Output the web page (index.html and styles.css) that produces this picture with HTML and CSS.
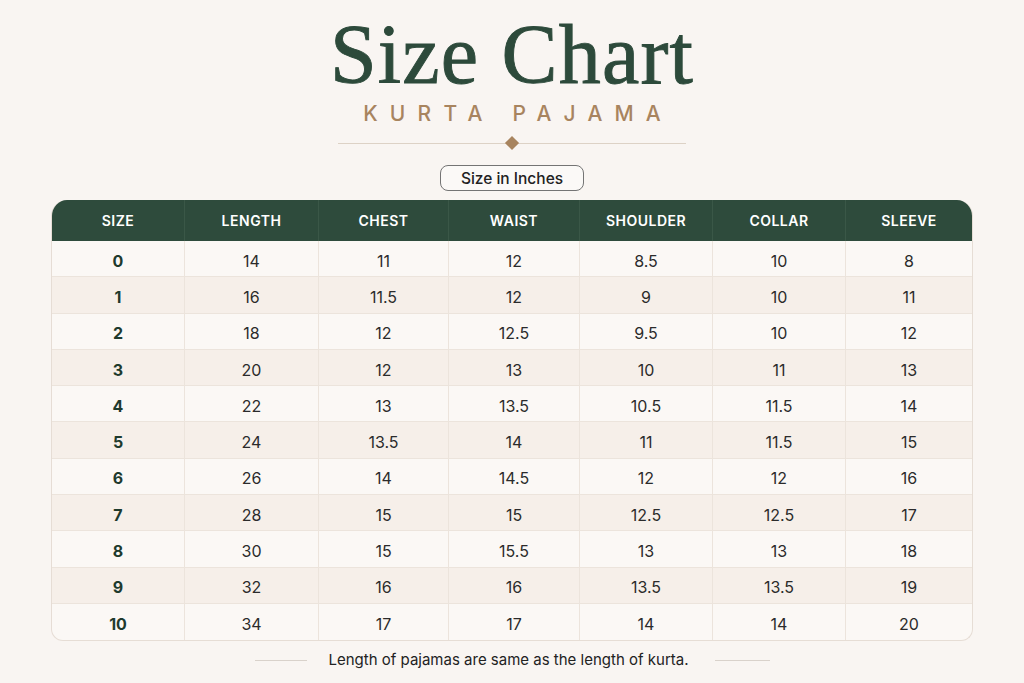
FILE: index.html
```html
<!DOCTYPE html>
<html lang="en">
<head>
<meta charset="utf-8">
<title>Size Chart – Kurta Pajama</title>
<link rel="stylesheet" href="styles.css">
</head>
<body>
<main class="page">
  <header class="heading">
    <h1 class="title">Size Chart</h1>
    <p class="subtitle">KURTA PAJAMA</p>
    <div class="divider"><span class="diamond"></span></div>
    <div class="unit">Size in Inches</div>
  </header>

  <section class="chart">
    <div class="row head">
      <div>SIZE</div><div>LENGTH</div><div>CHEST</div><div>WAIST</div><div>SHOULDER</div><div>COLLAR</div><div>SLEEVE</div>
    </div>
    <div class="row"><div class="sz">0</div><div>14</div><div>11</div><div>12</div><div>8.5</div><div>10</div><div>8</div></div>
    <div class="row"><div class="sz">1</div><div>16</div><div>11.5</div><div>12</div><div>9</div><div>10</div><div>11</div></div>
    <div class="row"><div class="sz">2</div><div>18</div><div>12</div><div>12.5</div><div>9.5</div><div>10</div><div>12</div></div>
    <div class="row"><div class="sz">3</div><div>20</div><div>12</div><div>13</div><div>10</div><div>11</div><div>13</div></div>
    <div class="row"><div class="sz">4</div><div>22</div><div>13</div><div>13.5</div><div>10.5</div><div>11.5</div><div>14</div></div>
    <div class="row"><div class="sz">5</div><div>24</div><div>13.5</div><div>14</div><div>11</div><div>11.5</div><div>15</div></div>
    <div class="row"><div class="sz">6</div><div>26</div><div>14</div><div>14.5</div><div>12</div><div>12</div><div>16</div></div>
    <div class="row"><div class="sz">7</div><div>28</div><div>15</div><div>15</div><div>12.5</div><div>12.5</div><div>17</div></div>
    <div class="row"><div class="sz">8</div><div>30</div><div>15</div><div>15.5</div><div>13</div><div>13</div><div>18</div></div>
    <div class="row"><div class="sz">9</div><div>32</div><div>16</div><div>16</div><div>13.5</div><div>13.5</div><div>19</div></div>
    <div class="row last"><div class="sz">10</div><div>34</div><div>17</div><div>17</div><div>14</div><div>14</div><div>20</div></div>
  </section>

  <footer class="note">
    <span class="rule"></span>
    <p>Length of pajamas are same as the length of kurta.</p>
    <span class="rule rule-right"></span>
  </footer>
</main>
</body>
</html>
```

FILE: styles.css
```css
* { box-sizing: border-box; }

html, body {
  margin: 0;
  padding: 0;
  background: #f9f5f2;
}

body {
  font-family: Inter, "Noto Sans", "Liberation Sans", sans-serif;
  color: #2a2a2a;
}

.page {
  width: 1024px;
  height: 683px;
  overflow: hidden;
  display: flex;
  flex-direction: column;
  align-items: center;
}

.heading {
  display: flex;
  flex-direction: column;
  align-items: center;
  padding-top: 13px;
}

.title {
  margin: 0;
  font-family: "Liberation Serif", "DejaVu Serif", serif;
  font-weight: 400;
  font-size: 84px;
  line-height: 84px;
  letter-spacing: 1.2px;
  color: #2d4a3b;
  -webkit-text-stroke: 0.9px #2d4a3b;
}

.subtitle {
  margin: 5px 0 0;
  font-size: 21px;
  line-height: 24px;
  font-weight: 500;
  letter-spacing: 12.2px;
  padding-left: 12.2px;
  color: #a8845f;
}

.divider {
  position: relative;
  width: 348px;
  height: 14px;
  margin-top: 10px;
  display: flex;
  align-items: center;
  justify-content: center;
}

.divider::before {
  content: "";
  position: absolute;
  left: 0;
  right: 0;
  top: 7px;
  height: 1px;
  background: #ddd2c6;
}

.diamond {
  position: relative;
  width: 10px;
  height: 10px;
  background: #a8845f;
  transform: rotate(45deg);
}

.unit {
  margin-top: 15px;
  width: 144px;
  height: 26px;
  border: 1px solid #747474;
  border-radius: 8px;
  display: flex;
  align-items: center;
  justify-content: center;
  font-size: 15.5px;
  font-weight: 500;
  color: #222;
  background: #fbf9f7;
}

.chart {
  margin-top: 9px;
  width: 922px;
  border: 1px solid #e6ddd5;
  border-top: 0;
  border-radius: 16px 16px 12px 12px;
  overflow: hidden;
  background: #fbf8f5;
}

.row {
  display: grid;
  grid-template-columns: 133px 134px 130px 131px 133px 133px 1fr;
  height: 36.3px;
  border-bottom: 1px solid #ece4dc;
}

.row > div {
  display: flex;
  align-items: center;
  justify-content: center;
  padding-top: 4px;
  border-right: 1px solid #ece4dc;
  font-size: 16px;
  color: #2b2b2b;
}

.row > div:last-child { border-right: 0; }

.row:nth-child(odd) { background: #f6efe9; }

.row.last { border-bottom: 0; }

.row .sz {
  font-weight: 700;
  color: #1e3a2d;
}

.row.head {
  height: 41px;
  background: #2e4b3c;
  border-bottom: 0;
}

.row.head > div {
  padding-top: 0;
  color: #ffffff;
  font-size: 14px;
  font-weight: 600;
  letter-spacing: 0.5px;
  border-right: 1px solid #3a5747;
}

.row.head > div:last-child { border-right: 0; }

.note {
  margin-top: 9px;
  display: flex;
  align-items: center;
  gap: 22px;
}

.note p {
  margin: 0;
  font-size: 15px;
  line-height: 20px;
  color: #222;
}

.rule {
  width: 52px;
  height: 1px;
  background: #d9d2cb;
}

.rule-right {
  width: 55px;
  margin-left: 4px;
}
```
